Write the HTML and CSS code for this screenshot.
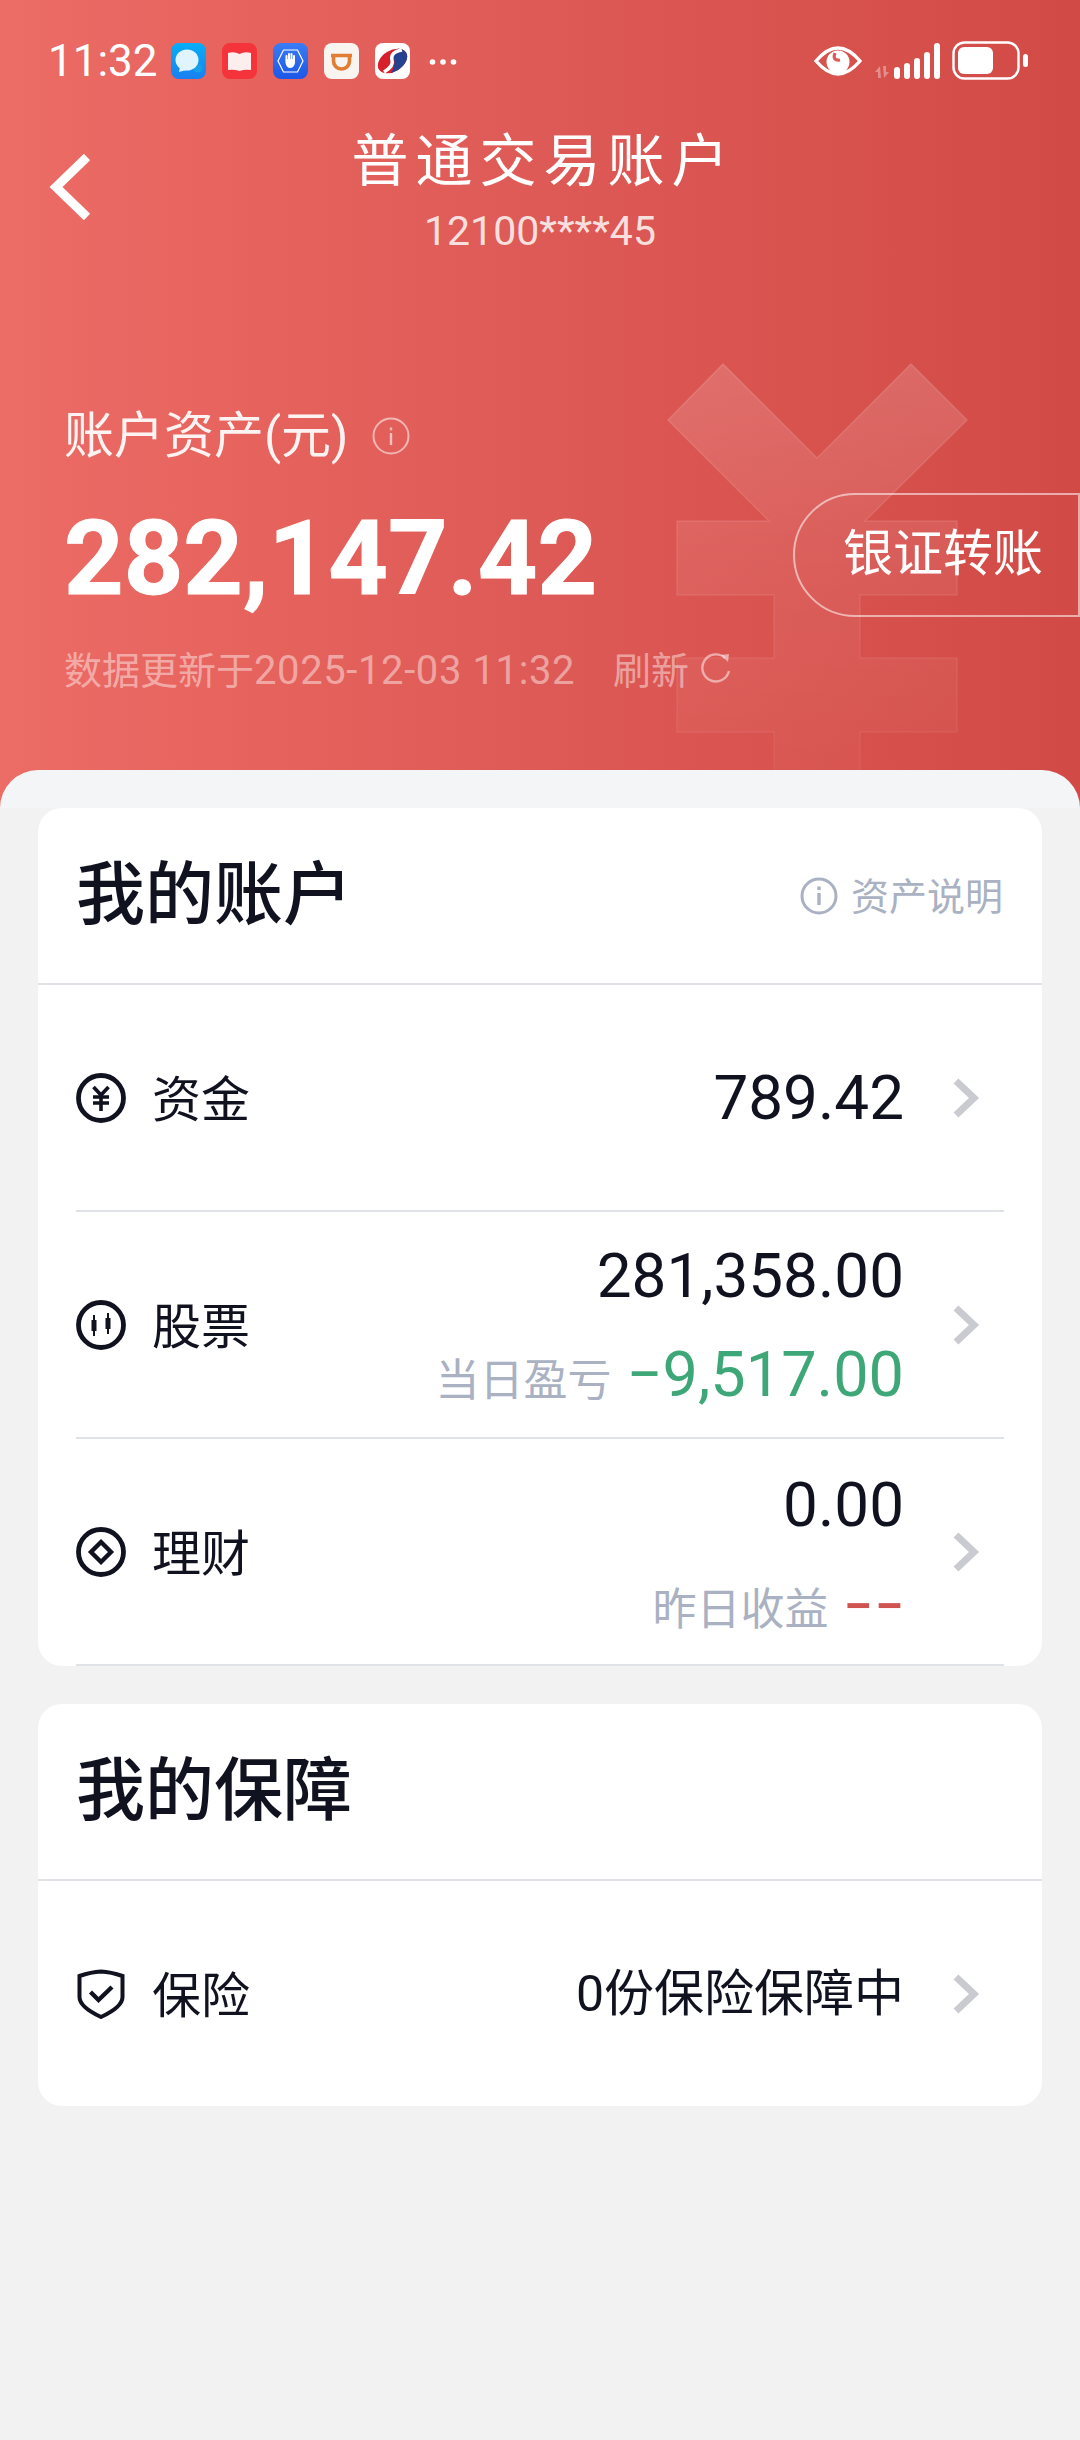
FILE: index.html
```html
<!DOCTYPE html>
<html lang="zh-CN">
<head>
<meta charset="utf-8">
<title>普通交易账户</title>
<link rel="stylesheet" href="styles.css">
</head>
<body>
<div class="app">
  <header class="hero">
    <svg class="watermark" viewBox="0 0 320 460" width="320" height="460">
      <defs>
        <linearGradient id="wm" x1="0" y1="0" x2="0" y2="1">
          <stop offset="0" stop-color="#fff" stop-opacity=".15"/>
          <stop offset=".45" stop-color="#fff" stop-opacity=".07"/>
          <stop offset="1" stop-color="#fff" stop-opacity=".015"/>
        </linearGradient>
        <linearGradient id="wms" x1="0" y1="0" x2="0" y2="1">
          <stop offset="0" stop-color="#fff" stop-opacity=".14"/>
          <stop offset="1" stop-color="#fff" stop-opacity=".04"/>
        </linearGradient>
      </defs>
      <path d="M56 1 L150 95 L244 1 L300 57 L198 158 L290 158 L290 232 L193 232 L193 295 L290 295 L290 369 L193 369 L193 460 L107 460 L107 369 L10 369 L10 295 L107 295 L107 232 L10 232 L10 158 L102 158 L1 57 Z" fill="url(#wm)" stroke="url(#wms)" stroke-width="1.5"/>
    </svg>

    <div class="status">
      <span class="time">11:32</span>
      <svg class="app-ico" viewBox="0 0 35 36"><defs><linearGradient id="a1" x1="0" y1="0" x2="0" y2="1"><stop offset="0" stop-color="#06aef8"/><stop offset="1" stop-color="#1a7ff0"/></linearGradient></defs><rect width="35" height="36" rx="8" fill="url(#a1)"/><circle cx="27" cy="25" r="4.500" fill="#17a0e8"/><ellipse cx="16" cy="17" rx="11.500" ry="10.500" fill="#dff4fd"/><path d="M9 24 L8 29 L15 27 Z" fill="#dff4fd"/></svg>
      <svg class="app-ico" viewBox="0 0 35 36"><rect width="35" height="36" rx="8" fill="#f4333a"/><path d="M6 10 Q12 8 17.500 11 Q23 8 29 10 L29 27 Q23 26 17.500 28 Q12 26 6 27 Z" fill="#fdeeee"/></svg>
      <svg class="app-ico" viewBox="0 0 35 36"><defs><linearGradient id="a3" x1="0" y1="0" x2="0" y2="1"><stop offset="0" stop-color="#3a7cf5"/><stop offset="1" stop-color="#1c57e6"/></linearGradient></defs><rect width="35" height="36" rx="8" fill="url(#a3)"/><path d="M10.500 7 L24.500 7 L30 18 L24.500 29 L10.500 29 L5 18 Z" fill="none" stroke="#fff" stroke-width="1.200"/><path d="M13.500 17 L13.500 13 M16 17 L16 11 M18.500 17 L18.500 11 M21 17.500 L21 13" stroke="#fff" stroke-width="2" stroke-linecap="round"/><path d="M12.500 16 L22 16 L22 20 Q21 25 17 25 Q13.500 25 12.500 20 Z" fill="#fff"/></svg>
      <svg class="app-ico" viewBox="0 0 35 36"><rect width="35" height="36" rx="8" fill="#f8f4f0"/><path d="M7 12.500 L28 12.500 M9.500 13 L9.500 18 A8 8 0 0 0 25.500 18 L25.500 13" fill="none" stroke="#e27d36" stroke-width="3.600"/></svg>
      <svg class="app-ico" viewBox="0 0 35 36"><defs><clipPath id="a5"><ellipse cx="17.500" cy="18" rx="16" ry="10.500" transform="rotate(-32 17.500 18)"/></clipPath></defs><rect width="35" height="36" rx="8" fill="#fff"/><g clip-path="url(#a5)"><rect width="35" height="36" fill="#d81f2c"/><path d="M26 3 Q17 10 19 16 Q21 22 15 32 L36 32 L36 3 Z" fill="#25418f"/><path d="M27 7 Q15 9 17 17 Q19 23 9 29" fill="none" stroke="#fff" stroke-width="3.500"/></g></svg>
      <svg class="dots" viewBox="0 0 28 8" width="28" height="8"><circle cx="3.500" cy="4" r="2.800"/><circle cx="14" cy="4" r="2.800"/><circle cx="24.500" cy="4" r="2.800"/></svg>
      <span class="spacer"></span>
      <svg class="eye" viewBox="0 0 48 34" width="48" height="34"><path d="M2 17 Q24 -9 46 17 Q24 43 2 17 Z" fill="none" stroke="#fff" stroke-width="3.400"/><circle cx="24" cy="18" r="11.500" fill="#fff"/><path d="M21 9 Q18 17 26 16" fill="none" stroke="#dd5a56" stroke-width="3.200"/></svg>
      <svg class="signal" viewBox="0 0 66 36" width="66" height="36"><path d="M5 23 L0 29 L3 29 L3 35 L6 35 Z M9 35 L14 29 L11 29 L11 23 L8 23 Z" fill="#fff" fill-opacity=".35"/><g fill="#fff"><rect x="19" y="24" width="6" height="12" rx="3"/><rect x="29" y="20" width="6" height="16" rx="3"/><rect x="39" y="15" width="6" height="21" rx="3"/><rect x="49" y="9" width="6" height="27" rx="3"/><rect x="59" y="0" width="6" height="36" rx="3"/></g></svg>
      <svg class="battery" viewBox="0 0 76 40" width="76" height="40"><rect x="1.500" y="1.500" width="65" height="36" rx="11" fill="none" stroke="#fff" stroke-width="2.400"/><rect x="6" y="6" width="35" height="27" rx="6" fill="#fff"/><rect x="71" y="13" width="5" height="13" rx="2.500" fill="#fff"/></svg>
    </div>

    <div class="nav">
      <svg class="back" viewBox="0 0 44 66" width="44" height="66"><path d="M40 3 L9 33 L40 63" fill="none" stroke="#fff" stroke-width="9"/></svg>
      <div class="nav-title">
        <div class="title">普通交易账户</div>
        <div class="account">12100****45</div>
      </div>
    </div>

    <div class="asset-label">
      <span>账户资产(元)</span>
      <svg class="asset-info" viewBox="0 0 38 38" width="38" height="38"><circle cx="19" cy="19" r="17.500" fill="none" stroke="#fff" stroke-opacity=".55" stroke-width="2"/><rect x="17.800" y="16" width="2.400" height="12" fill="#fff" fill-opacity=".6"/><rect x="17.800" y="10.500" width="2.400" height="2.800" fill="#fff" fill-opacity=".6"/></svg>
    </div>

    <div class="amount-row">
      <div class="amount">282,147.42</div>
      <div class="transfer">银证转账</div>
    </div>

    <div class="updated">
      <span>数据更新于<span class="stamp">2025-12-03 11:32</span></span>
      <span class="refresh">刷新</span>
      <svg class="refresh-ico" viewBox="0 0 32 32" width="32" height="32"><path d="M25 7 A13.500 13.500 0 1 0 29 20" fill="none" stroke="#fff" stroke-opacity=".5" stroke-width="2.400"/><path d="M21 4 L29 3 L28 11 Z" fill="#fff" fill-opacity=".5"/></svg>
    </div>

    <div class="sheet-top"></div>
  </header>

  <main class="content">
    <section class="card">
      <div class="card-head">
        <h2 class="card-title">我的账户</h2>
        <div class="explain">
          <svg viewBox="0 0 38 38" width="38" height="38"><circle cx="19" cy="19" r="17" fill="none" stroke="#a9b1c2" stroke-width="3"/><rect x="17.300" y="16" width="3.400" height="12" fill="#a9b1c2"/><rect x="17.300" y="9.500" width="3.400" height="3.600" fill="#a9b1c2"/></svg>
          <span class="explain-text">资产说明</span>
        </div>
      </div>

      <div class="row">
        <svg class="row-ico" viewBox="0 0 50 50" width="50" height="50"><circle cx="25" cy="25" r="22.500" fill="none" stroke="#11121f" stroke-width="4.800"/><path d="M17.500 14 L25 22 L32.500 14" fill="none" stroke="#11121f" stroke-width="3.600"/><path d="M17 24 H33 M17 30 H33 M25 22 V38" fill="none" stroke="#11121f" stroke-width="3.600"/></svg>
        <span class="row-label">资金</span>
        <div class="values"><div class="value">789.42</div></div>
        <svg class="chev" viewBox="0 0 28 42" width="28" height="42"><path d="M4 4 L22 21 L4 38" fill="none" stroke="#c9cbd0" stroke-width="7"/></svg>
      </div>

      <div class="row">
        <svg class="row-ico" viewBox="0 0 50 50" width="50" height="50"><circle cx="25" cy="25" r="22.500" fill="none" stroke="#11121f" stroke-width="4.800"/><path d="M18 15 V36 M32 13 V34" stroke="#11121f" stroke-width="2"/><rect x="15.500" y="20" width="5" height="11" fill="#11121f"/><rect x="29.500" y="18" width="5" height="11" fill="#11121f"/></svg>
        <span class="row-label">股票</span>
        <div class="values">
          <div class="value">281,358.00</div>
          <div class="sub"><span class="sub-label">当日盈亏</span><span class="value loss">−9,517.00</span></div>
        </div>
        <svg class="chev" viewBox="0 0 28 42" width="28" height="42"><path d="M4 4 L22 21 L4 38" fill="none" stroke="#c9cbd0" stroke-width="7"/></svg>
      </div>

      <div class="row">
        <svg class="row-ico" viewBox="0 0 50 50" width="50" height="50"><circle cx="25" cy="25" r="22.500" fill="none" stroke="#11121f" stroke-width="4.800"/><path d="M25 15 L35 25 L25 35 L15 25 Z" fill="none" stroke="#11121f" stroke-width="4.400"/></svg>
        <span class="row-label">理财</span>
        <div class="values values-low">
          <div class="value">0.00</div>
          <div class="sub sub-tall"><span class="sub-label">昨日收益</span><span class="dash">−−</span></div>
        </div>
        <svg class="chev" viewBox="0 0 28 42" width="28" height="42"><path d="M4 4 L22 21 L4 38" fill="none" stroke="#c9cbd0" stroke-width="7"/></svg>
      </div>
    </section>

    <section class="card">
      <div class="card-head">
        <h2 class="card-title">我的保障</h2>
      </div>
      <div class="row row-plain">
        <svg class="row-ico" viewBox="0 0 50 50" width="50" height="50"><path d="M25 2.500 Q35 3 46.500 7 V28 Q46.500 38 25 48 Q3.500 38 3.500 28 V7 Q15 3 25 2.500 Z" fill="none" stroke="#11121f" stroke-width="4"/><path d="M14.500 23 L22.500 31 L36 18" fill="none" stroke="#11121f" stroke-width="4.400"/></svg>
        <span class="row-label">保险</span>
        <div class="values"><div class="value value-cjk">0份保险保障中</div></div>
        <svg class="chev" viewBox="0 0 28 42" width="28" height="42"><path d="M4 4 L22 21 L4 38" fill="none" stroke="#c9cbd0" stroke-width="7"/></svg>
      </div>
    </section>
  </main>
</div>
</body>
</html>
```

FILE: styles.css
```css
* { box-sizing: border-box; }
html, body { margin: 0; padding: 0; }
body {
  background: #f2f2f2;
  font-family: Roboto, "Noto Sans CJK SC", sans-serif;
  color: #11121f;
}
.app {
  width: 1080px;
  height: 2440px;
  background: #f2f2f2;
  overflow: hidden;
}

/* hero */
.hero {
  position: relative;
  height: 808px;
  display: flex;
  flex-direction: column;
  color: #fff;
  background: linear-gradient(90deg, #ec6c66 0%, #e6625d 25%, #de5a56 50%, #d8524e 75%, #d14a46 100%);
  overflow: hidden;
}
.watermark {
  position: absolute;
  left: 667px;
  top: 363px;
}
.status {
  position: relative;
  height: 122px;
  display: flex;
  align-items: center;
  padding: 0 52px 0 48px;
}
.time {
  font-size: 44px;
  font-weight: 400;
  width: 123px;
}
.app-ico {
  width: 35px;
  height: 36px;
  margin-right: 16px;
  display: block;
}
.dots {
  fill: #fff;
  margin-left: 3px;
  margin-top: 2px;
}
.spacer { flex: 1; }
.eye { margin-right: 13px; }
.signal { margin-right: 11px; }

.nav {
  position: relative;
  display: grid;
  grid-template-columns: 1fr auto 1fr;
  padding-left: 47px;
}
.back {
  margin-top: 32px;
}
.nav-title {
  text-align: center;
  margin-left: -47px;
}
.title {
  font-size: 57px;
  line-height: 80px;
  letter-spacing: 7px;
  margin-right: -7px;
}
.account {
  font-size: 41px;
  line-height: 58px;
  color: rgba(255, 255, 255, .82);
}

.asset-label {
  position: relative;
  margin-top: 146px;
  padding-left: 64px;
  height: 60px;
  display: flex;
  align-items: center;
  font-size: 50px;
  line-height: 60px;
  color: rgba(255, 255, 255, .92);
}
.asset-info { margin-left: 23px; }

.amount-row {
  position: relative;
  margin-top: 27px;
  display: flex;
  align-items: center;
  justify-content: space-between;
  padding-left: 64px;
}
.amount {
  font-size: 104px;
  font-weight: 700;
  line-height: 116px;
  padding-top: 8px;
  -webkit-text-stroke: 1px #fff;
}
.transfer {
  width: 287px;
  height: 124px;
  border: 2px solid rgba(255, 255, 255, .55);
  border-radius: 62px 0 0 62px;
  font-size: 50px;
  line-height: 118px;
  padding-left: 48px;
}

.updated {
  position: relative;
  margin-top: 25px;
  padding-left: 64px;
  display: flex;
  align-items: center;
  height: 50px;
  font-size: 38px;
  color: rgba(255, 255, 255, .45);
}
.stamp {
  font-size: 40px;
  letter-spacing: .6px;
}
.refresh { margin-left: 38px; }
.refresh-ico { margin-left: 11px; }

.sheet-top {
  position: relative;
  margin-top: auto;
  height: 38px;
  background: #f4f5f7;
  border-radius: 40px 40px 0 0;
}

/* cards */
.content {
  padding: 0 38px;
  display: flex;
  flex-direction: column;
  gap: 38px;
}
.card {
  background: #fff;
  border-radius: 24px;
  overflow: hidden;
}
.card-head {
  height: 177px;
  display: flex;
  align-items: center;
  justify-content: space-between;
  padding: 0 39px 0 38px;
  border-bottom: 2px solid #dfe2e6;
}
.card-title {
  margin: 0;
  font-size: 69px;
  font-weight: 500;
  line-height: 80px;
}
.explain {
  display: flex;
  align-items: center;
  gap: 13px;
  font-size: 38px;
  color: #a9b1c2;
}
.explain-text { padding-bottom: 4px; }

.row {
  height: 227px;
  margin: 0 38px;
  display: flex;
  align-items: center;
  border-bottom: 2px solid #dfe2e6;
}
.row-plain {
  height: 225px;
  border-bottom: 0;
}
.row-ico { flex: none; }
.row-label {
  margin-left: 26px;
  padding-bottom: 5px;
  flex: 1;
  font-size: 49px;
}
.values {
  display: flex;
  flex-direction: column;
  align-items: flex-end;
}
.values-low { padding-top: 10px; }
.value {
  font-size: 62px;
  line-height: 99px;
  white-space: nowrap;
}
.value-cjk {
  font-size: 50px;
  padding-top: 2px;
}
.sub {
  display: flex;
  align-items: baseline;
  height: 99px;
}
.sub-tall {
  height: 105px;
  align-items: center;
}
.sub-label {
  font-size: 44px;
  color: #a9b1c2;
  margin-right: 15px;
}
.loss {
  color: #3ea777;
  font-size: 63px;
}
.dash {
  font-size: 52px;
  font-weight: 500;
  letter-spacing: 2px;
  margin-right: -2px;
  color: #cf5450;
}
.chev {
  flex: none;
  margin-left: 48px;
  margin-right: 24px;
}
```
